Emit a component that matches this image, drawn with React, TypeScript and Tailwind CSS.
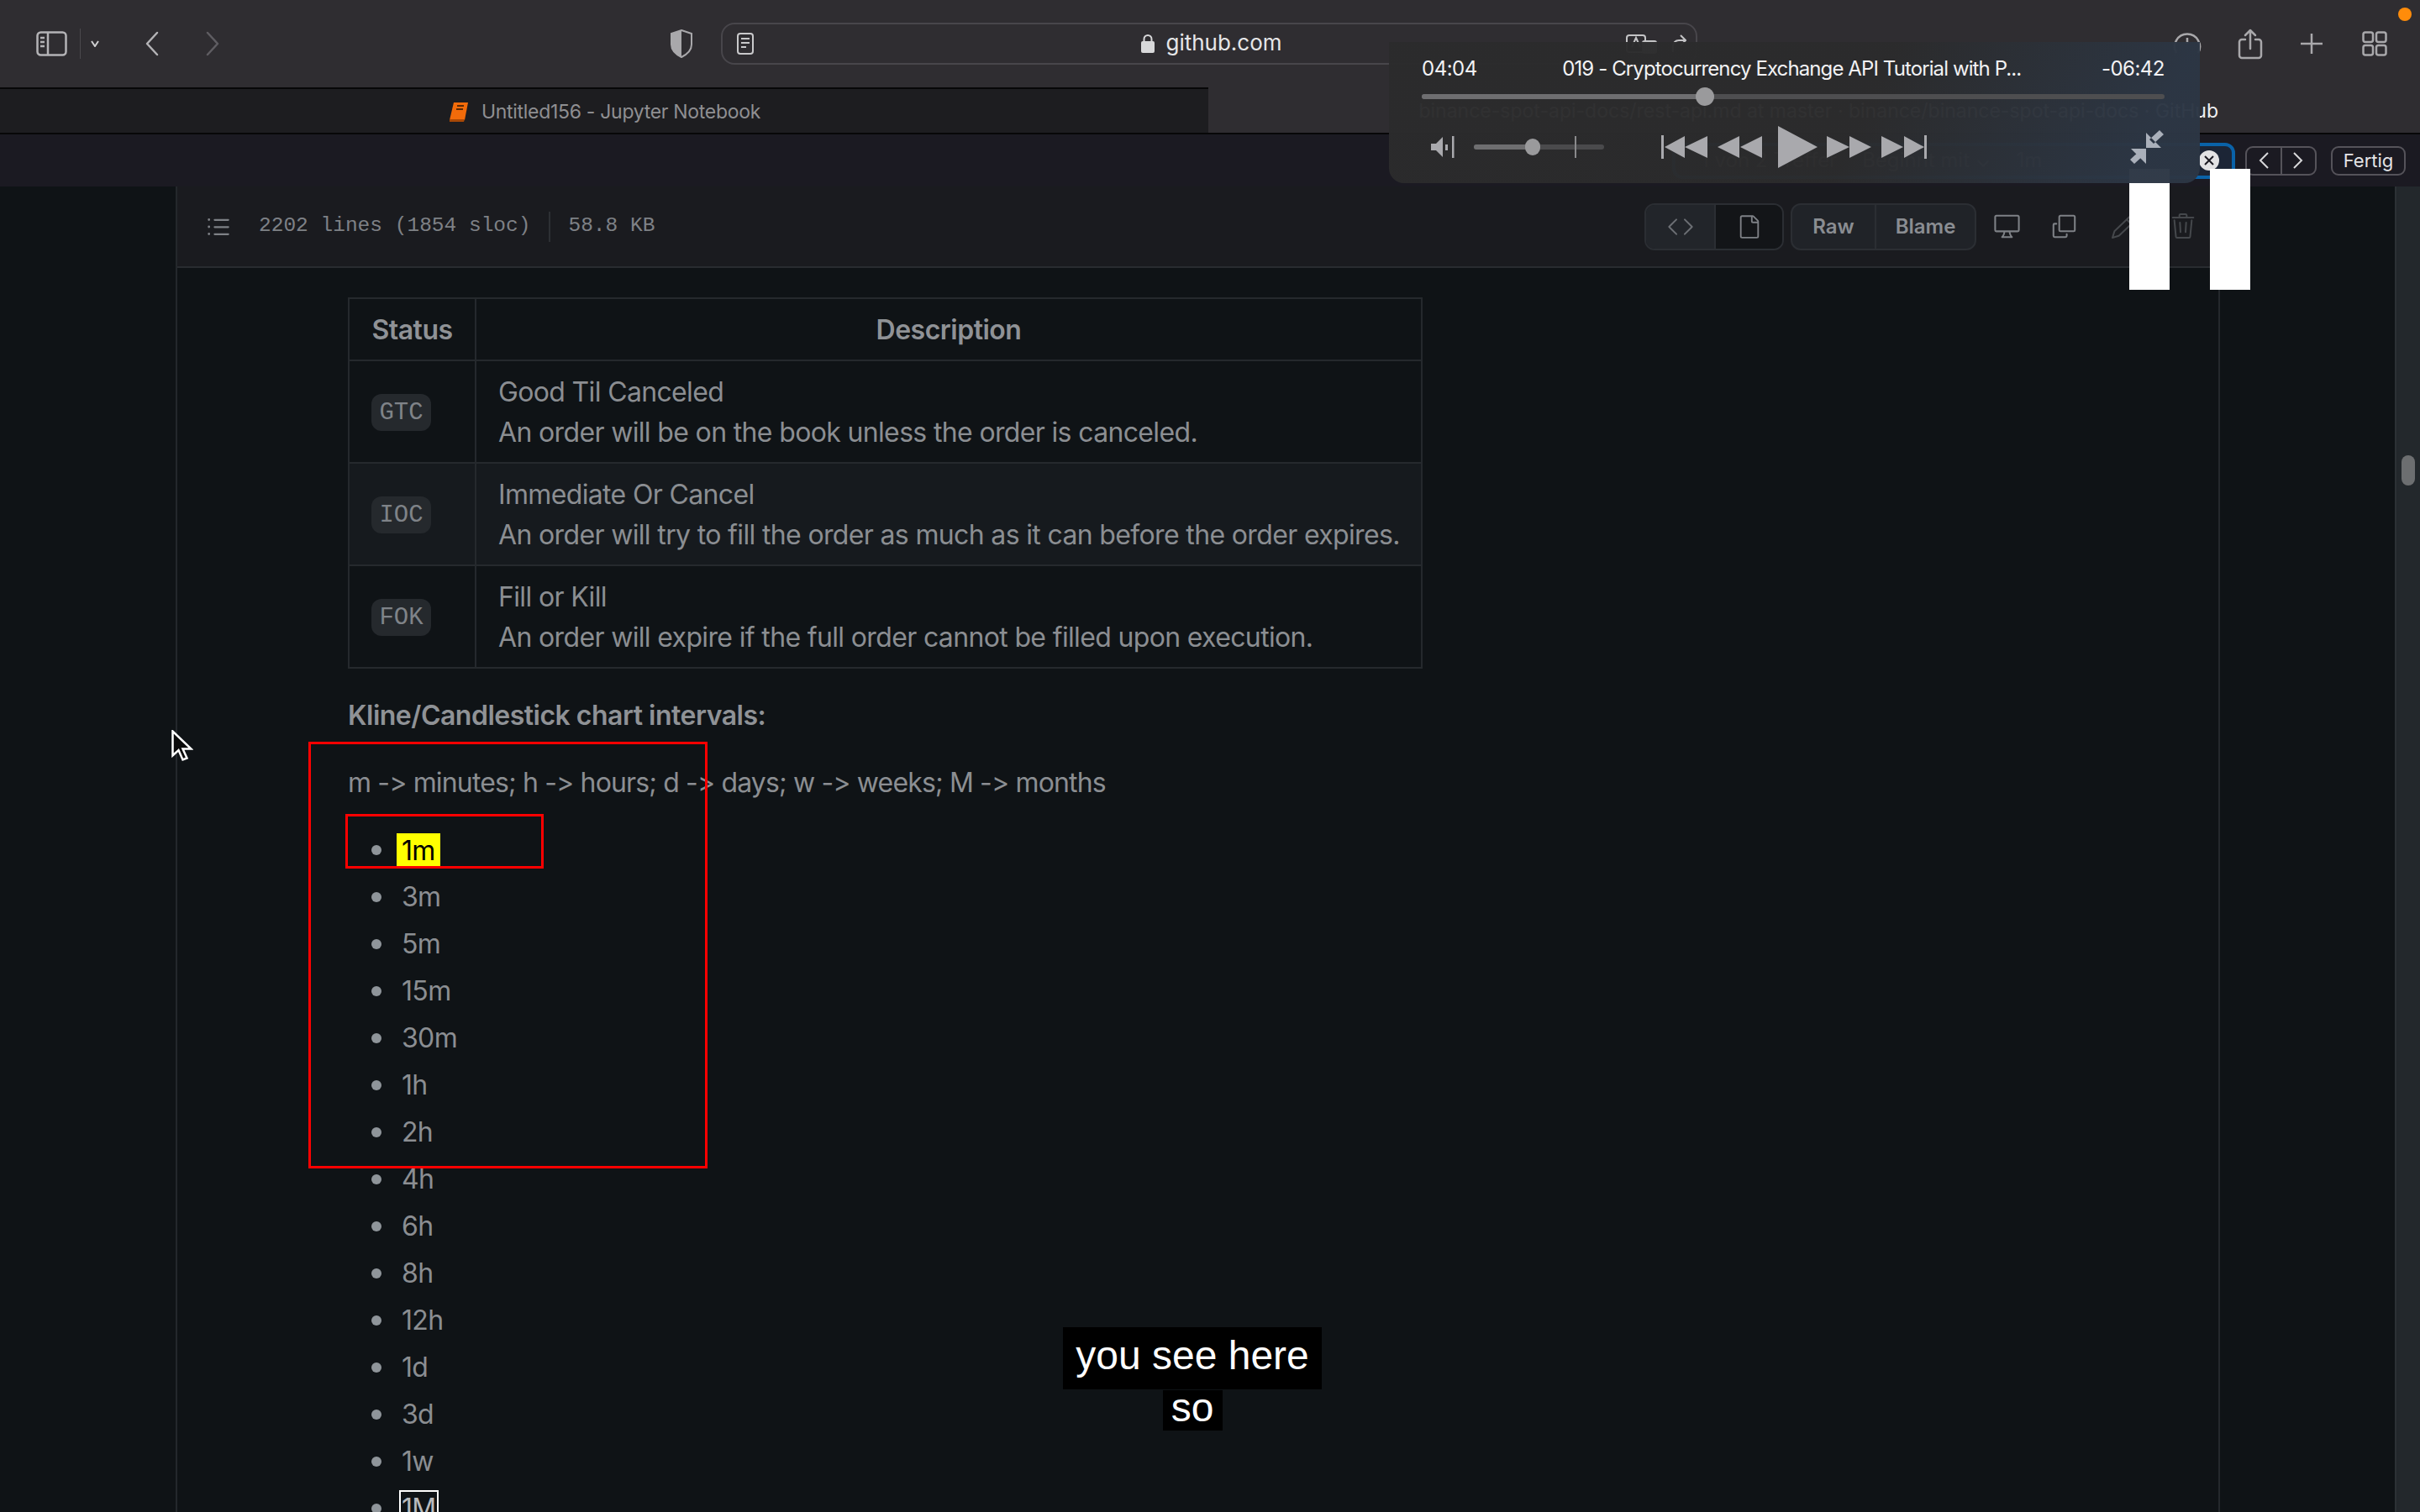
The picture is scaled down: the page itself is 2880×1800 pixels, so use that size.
import React from "react";
import { GoCode, GoCopy, GoDeviceDesktop, GoFile, GoListUnordered, GoPencil, GoTrash } from "react-icons/go";

const ui = { fontFamily: 'Inter, "Liberation Sans", sans-serif' };
const mono = { fontFamily: '"Liberation Mono", monospace' };

const rows = [
  ["GTC", "Good Til Canceled", "An order will be on the book unless the order is canceled."],
  ["IOC", "Immediate Or Cancel", "An order will try to fill the order as much as it can before the order expires."],
  ["FOK", "Fill or Kill", "An order will expire if the full order cannot be filled upon execution."],
];
const plainIntervals = ["3m", "5m", "15m", "30m", "1h", "2h", "4h", "6h", "8h", "12h", "1d", "3d", "1w"];

function Bullet() {
  return <span className="-ml-[36px] mr-[24px] h-[12px] w-[12px] shrink-0 rounded-full bg-[#8f959a]" />;
}

function Toolbar() {
  return (
    <div className="flex h-[104px] items-center bg-[#2f2d31] pl-[43px]">
      <svg width="37" height="30" viewBox="0 0 37 30" fill="none" stroke="#b4b3b6" strokeWidth="2.5" className="shrink-0">
        <rect x="1.5" y="1.5" width="34" height="27" rx="4" />
        <path d="M14 2v26M5 8h5M5 13h5M5 18h5" />
      </svg>
      <div className="ml-[15px] h-[36px] w-[1px] bg-[#4a484d]" />
      <svg width="10" height="8" viewBox="0 0 10 8" fill="none" stroke="#cfcfd1" strokeWidth="2" className="ml-[12px] shrink-0">
        <path d="M1 1l4 6 4-6" />
      </svg>
      <svg width="16" height="30" viewBox="0 0 16 30" fill="none" stroke="#b4b3b6" strokeWidth="2.5" strokeLinecap="round" strokeLinejoin="round" className="ml-[55px] shrink-0">
        <path d="M14 2L2 15l12 13" />
      </svg>
      <svg width="16" height="30" viewBox="0 0 16 30" fill="none" stroke="#5f5d62" strokeWidth="2.5" strokeLinecap="round" strokeLinejoin="round" className="ml-[56px] shrink-0">
        <path d="M2 2l12 13L2 28" />
      </svg>
      <svg width="28" height="34" viewBox="0 0 28 34" className="ml-[536px] shrink-0">
        <path d="M14 1l12 4v13c0 7-6 12-12 15C8 30 2 25 2 18V5z" fill="none" stroke="#a9a8ab" strokeWidth="2" />
        <path d="M14 1L2 5v13c0 7 6 12 12 15z" fill="#a9a8ab" />
      </svg>
      <div className="ml-[33px] grid h-[50px] w-[1162px] shrink-0 grid-cols-[200px_1fr_200px] items-center rounded-[16px] border-2 border-[#48464b]">
        <div className="pl-[17px]">
          <svg width="20" height="26" viewBox="0 0 20 26" fill="none" stroke="#c9c9cb" strokeWidth="2">
            <rect x="1" y="1" width="18" height="24" rx="3" />
            <path d="M5 7h10M5 12h10M5 17h6" />
          </svg>
        </div>
        <div className="flex items-center justify-center gap-[13px] pb-[2px] pl-[6px]">
          <svg width="16" height="23" viewBox="0 0 16 23">
            <path d="M3.5 10V6.5a4.5 4.5 0 019 0V10" fill="none" stroke="#d8d8da" strokeWidth="2" />
            <rect y="9" width="16" height="14" rx="2" fill="#d8d8da" />
          </svg>
          <span className="text-[26px] leading-none text-[#e6e6e8]" style={ui}>github.com</span>
        </div>
        <div className="flex items-start justify-end gap-[15px] pr-[11px]">
          <svg width="37" height="24" viewBox="0 0 37 24" fill="none" stroke="#c4c4c6" strokeWidth="2">
            <rect x="1" y="2" width="22" height="20" rx="3" />
            <path d="M7 16l5-11 5 11" />
            <rect x="20" y="9" width="16" height="14" rx="2" fill="#c4c4c6" />
          </svg>
          <svg width="20" height="24" viewBox="0 0 20 24" fill="none" stroke="#c4c4c6" strokeWidth="2">
            <path d="M4 22v-7c0-4 3-7 7-7h7M13 2l6 6-6 6" />
          </svg>
        </div>
      </div>
      <svg width="34" height="32" viewBox="0 0 34 32" fill="none" stroke="#a9a8ab" strokeWidth="2.5" className="ml-[566px] shrink-0">
        <path d="M4 27A15 15 0 1130 27M17 9v7" />
      </svg>
      <svg width="30" height="37" viewBox="0 0 30 37" fill="none" stroke="#a9a8ab" strokeWidth="2.5" strokeLinecap="round" strokeLinejoin="round" className="ml-[43px] shrink-0">
        <path d="M9 13H5a3 3 0 00-3 3v16a3 3 0 003 3h20a3 3 0 003-3V16a3 3 0 00-3-3h-4M15 24V2M9 8l6-6 6 6" />
      </svg>
      <svg width="28" height="26" viewBox="0 0 28 26" fill="none" stroke="#a9a8ab" strokeWidth="2.5" className="ml-[44px] shrink-0">
        <path d="M14 1v24M1 13h26" />
      </svg>
      <svg width="30" height="30" viewBox="0 0 30 30" fill="none" stroke="#a9a8ab" strokeWidth="2.5" className="ml-[46px] shrink-0">
        <rect x="1.5" y="1.5" width="11.5" height="11.5" rx="2.5" />
        <rect x="17" y="1.5" width="11.5" height="11.5" rx="2.5" />
        <rect x="1.5" y="17" width="11.5" height="11.5" rx="2.5" />
        <rect x="17" y="17" width="11.5" height="11.5" rx="2.5" />
      </svg>
    </div>
  );
}

function Tabs() {
  return (
    <div className="flex h-[56px]" style={ui}>
      <div className="flex w-[1438px] items-center justify-center gap-[14px] border-y-2 border-y-[#070708] bg-[#1d1d20] pt-[2px]">
        <svg width="26" height="25" viewBox="0 0 26 25">
          <path d="M7 1h17l-4 21H2z" fill="#f26b0a" />
          <path d="M2 21h18l-1 3H2z" fill="#a84806" />
          <path d="M11 5h8M10 9h8" stroke="#5c2a05" strokeWidth="2" />
        </svg>
        <span className="text-[23px] leading-none tracking-[-0.3px] text-[#8f8f92]">Untitled156 - Jupyter Notebook</span>
      </div>
      <div className="flex flex-1 items-center justify-end gap-[14px] border-b-2 border-b-[#070708] bg-[#2f2d31] pr-[240px] pt-[2px]">
        <span className="whitespace-nowrap text-[23px] leading-none text-[#f0f0f2]">binance-spot-api-docs/rest-api.md at master · binance/binance-spot-api-docs · GitHub</span>
      </div>
    </div>
  );
}

function FindBar() {
  return (
    <div className="flex h-[62px] items-center justify-end gap-[12px] bg-[#1b1a22] pr-[17px] text-[24px] text-[#e4e4e6]" style={ui}>
      <div className="flex h-[43px] w-[670px] items-center rounded-[12px] border-4 border-[#0a62a8] bg-[#1c2536] pl-[30px] pr-[15px] text-[#8d8f96]">
        <span className="whitespace-nowrap">1 von 2 Treffer</span>
        <span className="ml-[30px] whitespace-nowrap">Beginnt mit ⌄</span>
        <span className="ml-[30px]">1m</span>
        <span className="ml-auto flex h-[24px] w-[24px] items-center justify-center rounded-full bg-[#e2e2e4]">
          <svg width="12" height="12" viewBox="0 0 12 12" stroke="#1b1a22" strokeWidth="2"><path d="M1 1l10 10M11 1L1 11" /></svg>
        </span>
      </div>
      <div className="flex h-[35px] w-[85px] rounded-[9px] border-2 border-[#55535a]">
        <div className="flex flex-1 items-center justify-center border-r-2 border-[#55535a]">
          <svg width="12" height="20" viewBox="0 0 12 20" fill="none" stroke="#d8d8da" strokeWidth="2"><path d="M11 1L2 10l9 9" /></svg>
        </div>
        <div className="flex flex-1 items-center justify-center">
          <svg width="12" height="20" viewBox="0 0 12 20" fill="none" stroke="#d8d8da" strokeWidth="2"><path d="M1 1l9 9-9 9" /></svg>
        </div>
      </div>
      <div className="ml-[5px] flex h-[35px] w-[89px] items-center justify-center rounded-[9px] border-2 border-[#55535a] text-[22px] leading-none">Fertig</div>
    </div>
  );
}

function FileHeader() {
  return (
    <div className="flex h-[97px] items-center border-b-2 border-[#292c30] bg-[#1a1b1f] pl-[32px] pr-[26px] text-[#7e8186]">
      <GoListUnordered size={34} />
      <span className="ml-[31px] whitespace-nowrap text-[24.5px]" style={mono}>2202 lines (1854 sloc)</span>
      <span className="ml-[22px] h-[36px] w-[2px] bg-[#2d3034]" />
      <span className="ml-[21px] whitespace-nowrap text-[24.5px]" style={mono}>58.8 KB</span>
      <div className="ml-auto flex h-[56px] w-[166px] overflow-hidden rounded-[12px] border-2 border-[#2b2e33]">
        <div className="flex w-[83px] items-center justify-center border-r-2 border-[#2b2e33] bg-[#22252a] text-[#6c6f74]"><GoCode size={32} /></div>
        <div className="flex flex-1 items-center justify-center bg-[#131518] text-[#7e8186]"><GoFile size={30} /></div>
      </div>
      <div className="ml-[8px] flex h-[56px] w-[221px] items-center overflow-hidden rounded-[12px] border-2 border-[#2b2e33] bg-[#202328] text-[24px] font-semibold text-[#8a8d92]" style={ui}>
        <span className="flex h-full w-[100px] items-center justify-center border-r-2 border-[#2b2e33]">Raw</span>
        <span className="flex flex-1 items-center justify-center">Blame</span>
      </div>
      <GoDeviceDesktop size={33} className="ml-[20px] text-[#7e8186]" />
      <GoCopy size={33} className="ml-[35px] text-[#7e8186]" />
      <GoPencil size={32} className="ml-[38px] text-[#45484c]" />
      <GoTrash size={32} className="ml-[39px] text-[#45484c]" />
    </div>
  );
}

function Article() {
  const cell = "border-2 border-[#25292d] px-[26px] pb-[11px] pt-[13px]";
  const head = "border-2 border-[#25292d] px-[26px] pb-[11px] pt-[13px] text-center font-semibold tracking-[-0.5px] text-[#8f9296]";
  return (
    <div className="pl-[203px] pt-[35px] text-[32px] leading-[48px] tracking-[-0.65px] text-[#8b8e92] [font-feature-settings:'calt'_0]" style={ui}>
      <table className="w-[1279px] table-fixed border-collapse">
        <colgroup>
          <col className="w-[151px]" />
          <col />
        </colgroup>
        <thead>
          <tr>
            <th className={head}>Status</th>
            <th className={head}>Description</th>
          </tr>
        </thead>
        <tbody>
          {rows.map(([code, title, text], i) => (
            <tr key={code} className={i === 1 ? "bg-[#161a1e]" : ""}>
              <td className={cell}>
                <code className="flex h-[44px] w-[71px] items-center justify-center rounded-[12px] bg-[#25292d] pt-[2px] text-[29px] tracking-normal text-[#7f8388]" style={mono}>{code}</code>
              </td>
              <td className={`whitespace-nowrap ${cell}`}>
                {title}
                <br />
                {text}
              </td>
            </tr>
          ))}
        </tbody>
      </table>
      <p className="mt-[32px] font-semibold tracking-[-0.5px] text-[#8f9296]">Kline/Candlestick chart intervals:</p>
      <p className="mt-[32px] tracking-[-0.85px]">m -&gt; minutes; h -&gt; hours; d -&gt; days; w -&gt; weeks; M -&gt; months</p>
      <ul className="mt-[32px] pl-[64px]">
        <li className="flex h-[48px] items-center">
          <Bullet />
          <span className="-ml-[6px] inline-block h-[41px] bg-[#ffff00] px-[6px] leading-[41px] text-black">1m</span>
        </li>
        {plainIntervals.map((v) => (
          <li key={v} className="mt-[8px] flex h-[48px] items-center">
            <Bullet />
            {v}
          </li>
        ))}
        <li className="mt-[8px] flex h-[48px] items-center">
          <Bullet />
          <span className="-ml-[3px] inline-block border-2 border-white px-[1px] leading-[40px] text-[#b8babd]">1M</span>
        </li>
      </ul>
    </div>
  );
}

function Player() {
  return (
    <div className="absolute left-[1653px] top-[50px] h-[168px] w-[965px] rounded-b-[18px] bg-[linear-gradient(115deg,#2b2b2cf8_58%,#2c3644f8_92%)] pl-[39px] pr-[42px] pt-[18px]" style={ui}>
      <div className="flex h-[28px] items-center justify-between text-[24px] leading-[28px] tracking-[-0.5px] text-[#f2f2f4]">
        <span>04:04</span>
        <span className="ml-[6px] whitespace-nowrap tracking-[-0.9px]">019 - Cryptocurrency Exchange API Tutorial with P...</span>
        <span>-06:42</span>
      </div>
      <div className="relative mt-[16px] h-[6px] rounded-full bg-[#4e4e50]">
        <div className="h-full w-[337px] rounded-full bg-[#6e6e70]" />
        <div className="absolute left-[326px] top-[-8px] h-[22px] w-[22px] rounded-full bg-[#9a9a9c]" />
      </div>
      <div className="mt-[32px] flex h-[50px] items-center">
        <svg width="28" height="26" viewBox="0 0 28 26" fill="#a9a9ad" className="ml-[11px] shrink-0">
          <path d="M0 9h6l8-8v24l-8-8H0z" />
          <rect x="17" y="10" width="3" height="7" />
          <rect x="25" y="0" width="2.5" height="26" />
        </svg>
        <div className="relative ml-[23px] h-[6px] w-[156px] rounded-full bg-[#4a4a4c]">
          <div className="h-full w-[70px] rounded-full bg-[#6e6e70]" />
          <div className="absolute left-[120px] top-[-10px] h-[26px] w-[1.5px] bg-[#8a8a8c]" />
          <div className="absolute left-[61px] top-[-7px] h-[20px] w-[18px] rounded-full bg-[#9a9a9c]" />
        </div>
        <svg width="316" height="50" viewBox="0 0 316 50" fill="#a9a9ad" className="ml-[68px] shrink-0">
          <rect x="0" y="11" width="3" height="28" />
          <path d="M4 25l24-13v26zM28 25l27-13v26zM67 25l26-13v26zM94 25l26-13v26zM139 0l47 25-47 25zM197 12l27 13-27 13zM224 12l26 13-26 13zM262 12l26 13-26 13zM289 12l24 13-24 13z" />
          <rect x="313" y="11" width="3" height="28" />
        </svg>
        <svg width="41" height="41" viewBox="0 0 41 41" fill="#aab0ba" className="ml-[242px] shrink-0">
          <path d="M19 3v18h18zM35 0l5 5-12 11-5-5zM1 22h18v18zM5 40l-5-5 12-11 5 5z" />
        </svg>
      </div>
    </div>
  );
}

export default function App() {
  return (
    <div className="relative h-[1800px] w-[2880px] overflow-hidden bg-[#0f1316]">
      <Toolbar />
      <Tabs />
      <FindBar />
      <div className="flex h-[1578px]">
        <div className="w-[209px] shrink-0" />
        <div className="w-[2433px] shrink-0 border-x-2 border-[#24282c]">
          <FileHeader />
          <Article />
        </div>
        <div className="flex flex-1 justify-end">
          <div className="w-[30px] border-l-2 border-[#2c3135] bg-[#23282c] pl-[6px] pt-[320px]">
            <div className="h-[36px] w-[16px] rounded-full bg-[#6c6e70]" />
          </div>
        </div>
      </div>

      <div className="absolute left-[2534px] top-[201px] h-[144px] w-[48px] bg-white" />
      <Player />
      <div className="absolute left-[2630px] top-[201px] h-[144px] w-[48px] bg-white" />
      <div className="absolute left-[2854px] top-[9px] h-[16px] w-[16px] rounded-full bg-[#ff8c0a]" />

      <div className="absolute left-[367px] top-[883px] h-[508px] w-[475px] border-[3px] border-[#ff0000]" />
      <div className="absolute left-[411px] top-[969px] h-[65px] w-[236px] border-[3px] border-[#ff0000]" />

      <svg width="26" height="38" viewBox="0 0 26 38" className="absolute left-[204px] top-[869px]">
        <path d="M1.5 1.5v29l7-6.5 5 11.5 5-2-5-11h10z" fill="#0a0a0a" stroke="#ffffff" strokeWidth="2.5" />
      </svg>

      <div className="absolute left-[1265px] top-[1580px] flex w-[308px] flex-col items-center text-[48px] text-white" style={{ fontFamily: '"Liberation Sans", sans-serif' }}>
        <span className="flex h-[74px] w-full items-center justify-center bg-black pb-[7px]">you see here</span>
        <span className="mt-[1px] flex h-[48px] w-[71px] items-center justify-center bg-black pb-[7px]">so</span>
      </div>
    </div>
  );
}
